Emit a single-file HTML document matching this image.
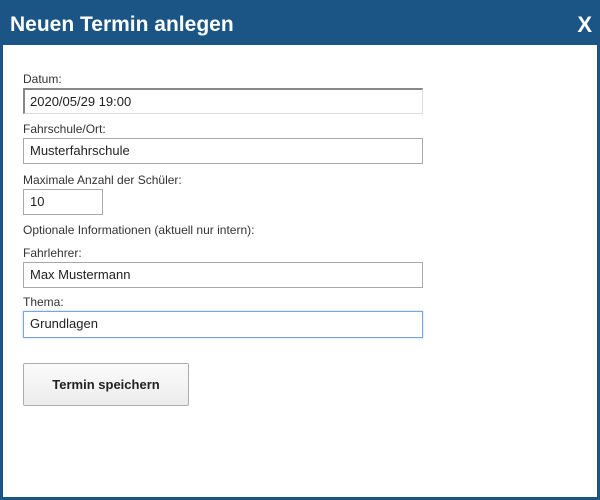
<!DOCTYPE html>
<html><head><style>
body{margin:0;width:600px;height:500px;background:#1b5585;font-family:"Liberation Sans",Arial,sans-serif;position:relative;overflow:hidden}
.h{position:absolute;left:10px;top:13px;color:#fff;font-weight:bold;font-size:21px}
.x{position:absolute;right:8px;top:12px;color:#fff;font-weight:bold;font-size:22px}
.c{position:absolute;left:3px;top:45px;width:594px;height:452px;background:#fff}
.l{position:absolute;left:23px;font-size:12px;color:#333}
.i{position:absolute;left:23px;border:1px solid #a9a9a9;box-sizing:border-box;width:400px;height:26px;font-size:13px;color:#222;padding:5px 6px;line-height:14px}
.b{position:absolute;left:23px;top:363px;width:166px;height:43px;box-sizing:border-box;border:1px solid #adadad;border-radius:2px;background:linear-gradient(#fbfbfb,#ececec);font-weight:bold;font-size:13px;text-align:center;line-height:41px;color:#222}
</style></head><body>
<div class="h">Neuen Termin anlegen</div><div class="x">X</div>
<div class="c"></div>
<div class="l" style="top:72px">Datum:</div>
<div class="i" style="top:88px;border-width:2px 1px 1px 2px;border-color:#888 #ddd #ddd #888;padding:5px 5px 4px">2020/05/29 19:00</div>
<div class="l" style="top:122px">Fahrschule/Ort:</div>
<div class="i" style="top:138px">Musterfahrschule</div>
<div class="l" style="top:173px">Maximale Anzahl der Schüler:</div>
<div class="i" style="top:189px;width:80px">10</div>
<div class="l" style="top:223px">Optionale Informationen (aktuell nur intern):</div>
<div class="l" style="top:246px">Fahrlehrer:</div>
<div class="i" style="top:262px">Max Mustermann</div>
<div class="l" style="top:295px">Thema:</div>
<div class="i" style="top:311px;height:27px;border-color:#7aa3e5;box-shadow:0 0 1px #7aa3e5">Grundlagen</div>
<div class="b">Termin speichern</div>
</body></html>
